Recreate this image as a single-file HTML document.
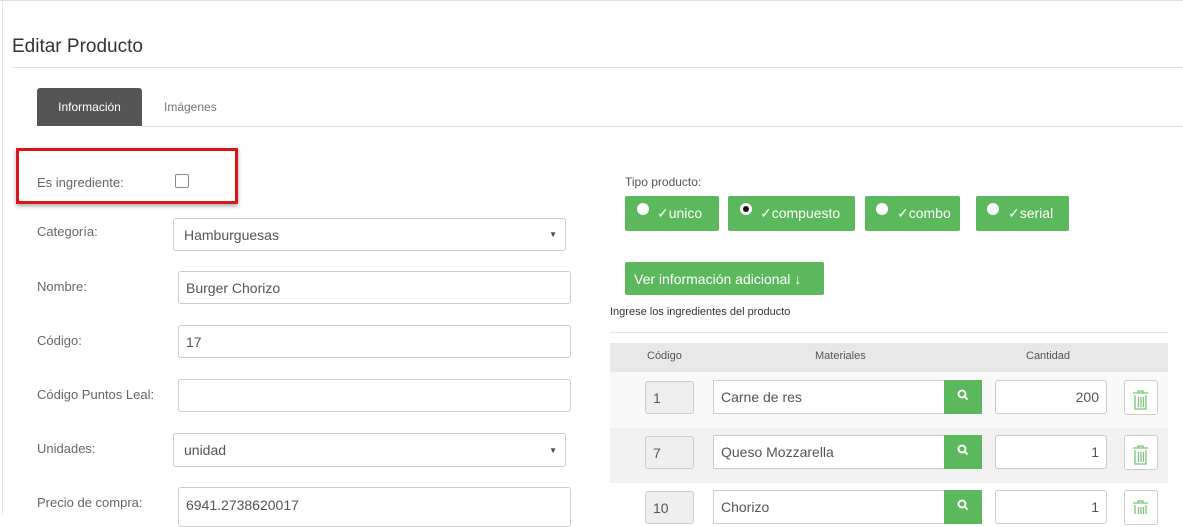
<!DOCTYPE html>
<html><head><meta charset="utf-8"><style>
*{box-sizing:border-box;margin:0;padding:0}
body{width:1183px;height:514px;overflow:hidden;background:#fff;font-family:"Liberation Sans",sans-serif;color:#555;position:relative}
.a{position:absolute}
.lbl{position:absolute;left:37px;font-size:13px;color:#666}
.in{position:absolute;border:1px solid #ccc;border-radius:3px;background:#fff;font-size:14px;color:#555;padding-left:7px;display:flex;align-items:center}
.sel{padding-left:10px}
.sel:after{content:"▼";position:absolute;right:8px;font-size:8px;color:#444}
.g{position:absolute;background:#5cb85c;color:#fff;border-radius:2px;font-size:14px;display:flex;align-items:center}
.rad{width:12px;height:12px;border-radius:50%;background:#fff;position:absolute;top:7px}
.th{position:absolute;top:350px;font-size:11px;color:#555}
.code{position:absolute;left:645px;width:49px;height:33px;background:#eee;border:1px solid #ccc;border-radius:3px;font-size:14px;padding-left:7px;display:flex;align-items:center}
.mat{position:absolute;left:713px;width:232px;height:34px;background:#fff;border:1px solid #ccc;border-right:none;font-size:14px;padding-left:7px;display:flex;align-items:center}
.srch{position:absolute;left:944px;width:38px;height:34px;background:#5cb85c}
.cant{position:absolute;left:995px;width:112px;height:34px;background:#fff;border:1px solid #ccc;border-radius:3px;font-size:14px;padding-right:7px;display:flex;align-items:center;justify-content:flex-end}
.tr{position:absolute;left:1124px;width:34px;height:35px;background:#fff;border:1px solid #ccc;border-radius:3px}
</style></head><body>
<div class="a" style="left:0;top:0;width:1183px;height:1px;background:#ddd"></div>
<div class="a" style="left:2px;top:0;width:1px;height:514px;background:#e5e5e5"></div>
<div class="a" style="left:12px;top:36px;font-size:19px;color:#333">Editar Producto</div>
<div class="a" style="left:12px;top:67px;width:1171px;height:1px;background:#e2e2e2"></div>
<div class="a" style="left:37px;top:88px;width:105px;height:38px;background:#555;border-radius:3px 3px 0 0;color:#fff;font-size:12px;display:flex;align-items:center;justify-content:center">Información</div>
<div class="a" style="left:164px;top:100px;font-size:12px;color:#777">Imágenes</div>
<div class="a" style="left:142px;top:126px;width:1041px;height:1px;background:#ddd"></div>
<div class="a" style="left:16px;top:148px;width:222px;height:56px;border:3px solid #d81818;box-shadow:0 2px 4px rgba(0,0,0,.35)"></div>
<div class="lbl" style="top:175px">Es ingrediente:</div>
<div class="a" style="left:175px;top:174px;width:14px;height:14px;border:1px solid #888;border-radius:2px"></div>
<div class="lbl" style="top:224px">Categoría:</div>
<div class="in sel" style="left:173px;top:218px;width:393px;height:33px">Hamburguesas</div>
<div class="lbl" style="top:279px">Nombre:</div>
<div class="in" style="left:178px;top:271px;width:393px;height:33px">Burger Chorizo</div>
<div class="lbl" style="top:333px">Código:</div>
<div class="in" style="left:178px;top:325px;width:393px;height:33px">17</div>
<div class="lbl" style="top:387px">Código Puntos Leal:</div>
<div class="in" style="left:178px;top:379px;width:393px;height:33px"></div>
<div class="lbl" style="top:441px">Unidades:</div>
<div class="in sel" style="left:173px;top:433px;width:393px;height:34px">unidad</div>
<div class="lbl" style="top:495px">Precio de compra:</div>
<div class="in" style="left:178px;top:487px;width:393px;height:40px;align-items:flex-start;padding-top:9px">6941.2738620017</div>

<div class="a" style="left:625px;top:175px;font-size:12px;color:#555">Tipo producto:</div>
<div class="g" style="left:625px;top:196px;width:94px;height:35px"><span class="rad" style="left:12px"></span><span style="margin-left:32px">✓unico</span></div>
<div class="g" style="left:728px;top:196px;width:127px;height:35px"><span class="rad" style="left:12px;border:3px solid #fff;background:#111"></span><span style="margin-left:32px">✓compuesto</span></div>
<div class="g" style="left:865px;top:196px;width:95px;height:35px"><span class="rad" style="left:11px"></span><span style="margin-left:32px">✓combo</span></div>
<div class="g" style="left:976px;top:196px;width:93px;height:35px"><span class="rad" style="left:11px"></span><span style="margin-left:32px">✓serial</span></div>
<div class="g" style="left:625px;top:262px;width:199px;height:33px;padding-left:9px">Ver información adicional&nbsp;<b>↓</b></div>
<div class="a" style="left:610px;top:306px;font-size:11px;color:#333">Ingrese los ingredientes del producto</div>
<div class="a" style="left:610px;top:332px;width:558px;height:1px;background:#e5e5e5"></div>
<div class="a" style="left:610px;top:343px;width:558px;height:29px;background:#e8e8e8"></div>
<div class="th" style="left:647px">Código</div>
<div class="th" style="left:815px">Materiales</div>
<div class="th" style="left:1026px">Cantidad</div>
<div class="a" style="left:610px;top:372px;width:558px;height:56px;background:#f9f9f9"></div>
<div class="a" style="left:610px;top:428px;width:558px;height:55px;background:#f1f1f1"></div>

<div class="code" style="top:381px">1</div><div class="mat" style="top:380px">Carne de res</div><div class="srch" style="top:380px"></div><div class="cant" style="top:380px">200</div><div class="tr" style="top:380px"></div>
<div class="code" style="top:436px">7</div><div class="mat" style="top:435px">Queso Mozzarella</div><div class="srch" style="top:435px"></div><div class="cant" style="top:435px">1</div><div class="tr" style="top:435px"></div>
<div class="code" style="top:491px">10</div><div class="mat" style="top:490px">Chorizo</div><div class="srch" style="top:490px"></div><div class="cant" style="top:490px">1</div><div class="tr" style="top:490px"></div>

<svg class="a" style="left:0;top:0" width="1183" height="514">
<g fill="none" stroke="#fff" stroke-width="2">
<circle cx="962" cy="394" r="3.5"/><path d="M964.5 396.5l3 3"/>
<circle cx="962" cy="449" r="3.5"/><path d="M964.5 451.5l3 3"/>
<circle cx="962" cy="504" r="3.5"/><path d="M964.5 506.5l3 3"/>
</g>
<g fill="none" stroke="#7cc37c" stroke-width="1.3">
<path d="M1133 393h15M1138 393v-2h5v2M1135 395v14h11v-14M1138.5 397v10M1141 397v10M1143.5 397v10"/>
<path d="M1133 448h15M1138 448v-2h5v2M1135 450v14h11v-14M1138.5 452v10M1141 452v10M1143.5 452v10"/>
<path d="M1133 503h15M1138 503v-2h5v2M1135 505v14h11v-14M1138.5 507v10M1141 507v10M1143.5 507v10"/>
</g>
</svg>
</body></html>
